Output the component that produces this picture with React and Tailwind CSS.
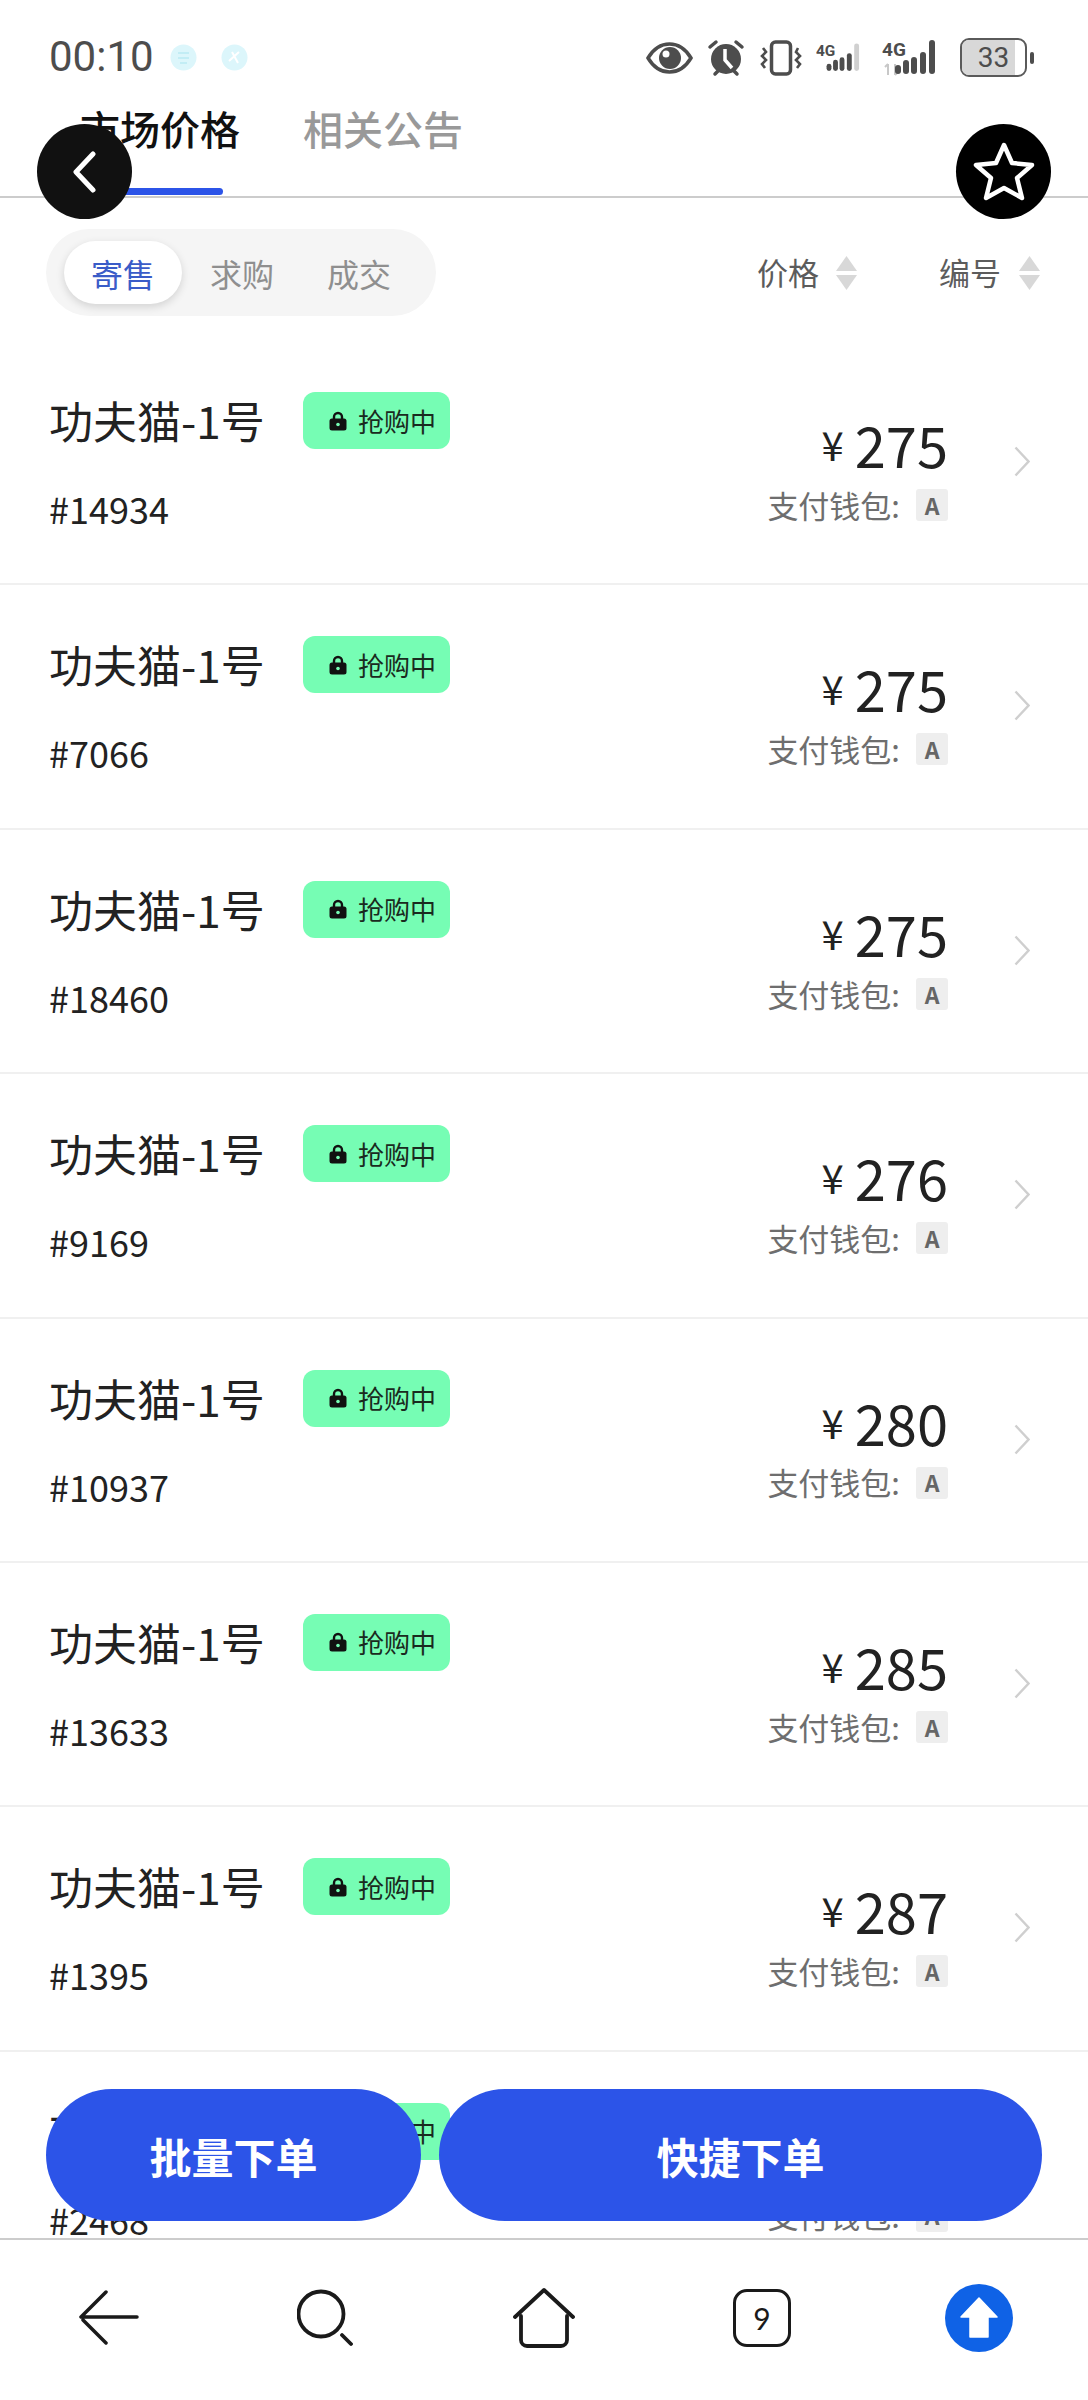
import React from "react";

const rows = [
  ["#14934", "275"], ["#7066", "275"], ["#18460", "275"], ["#9169", "276"],
  ["#10937", "280"], ["#13633", "285"], ["#1395", "287"], ["#2468", "287"],
];

function Sort() {
  return (
    <svg width="21" height="34" viewBox="0 0 21 34" className="block">
      <path d="M10.5 0 21 15H0Z" fill="#d8d8d8" />
      <path d="M10.5 34 21 19H0Z" fill="#d8d8d8" />
    </svg>
  );
}

function Signal({ lastGrey, arrows, w }) {
  const bars = [[21, 12, 7], [30, 9, 8], [39, 4, 8], [48, 0, 8], [57, 0, 8]];
  return (
    <svg width={w} height="36" viewBox="0 0 64 36" className="block">
      <text x="0" y="16" fontSize="19" fontWeight="700" fill="#4d4d4d" fontFamily="'Roboto', sans-serif">4G</text>
      {arrows && <path d="M6 24v11M3 27l3-3M13 24v11M16 32l-3 3" stroke="#c8c8c8" strokeWidth="2" fill="none" />}
      {[[13, 25, 9], [21, 20, 14], [29, 17, 17], [38, 12, 22], [47, 0, 34]].map(([x, y, h], i) => (
        <rect key={i} x={x} y={y} width="6" height={h} rx="3" fill={i === 4 && lastGrey ? "#d0d0d0" : "#4d4d4d"} />
      ))}
    </svg>
  );
}

function StatusBar() {
  return (
    <div className="flex h-[102px] items-start justify-between pl-[49px] pr-[54px] pt-[36px]">
      <div className="flex items-center">
        <span className="text-[42px] leading-[42px] text-[#4d4d4d]" style={{ fontFamily: "Roboto, sans-serif" }}>00:10</span>
        <svg width="27" height="27" viewBox="0 0 27 27" className="ml-[16px]">
          <circle cx="13.5" cy="13.5" r="13" fill="#dcf6fb" />
          <path d="M8 9h11M8 14h11M10 19h7" stroke="#c2edf5" strokeWidth="2" />
        </svg>
        <svg width="27" height="27" viewBox="0 0 27 27" className="ml-[24px]">
          <circle cx="13.5" cy="13.5" r="13" fill="#dcf6fb" />
          <path d="M8 17 18 8M11 8l6 11" stroke="#fff" strokeWidth="2" />
        </svg>
      </div>
      <div className="flex items-center pt-[2px]">
        <svg width="47" height="34" viewBox="0 0 47 34" fill="none">
          <path d="M2 17C8 7 15 3 23.5 3S39 7 45 17C39 27 32 31 23.5 31S8 27 2 17Z" stroke="#4d4d4d" strokeWidth="3.5" />
          <circle cx="24" cy="17" r="11" fill="#4d4d4d" />
          <circle cx="20" cy="13" r="3.5" fill="#fff" />
        </svg>
        <svg width="38" height="38" viewBox="0 0 38 38" fill="none" className="ml-[14px]">
          <circle cx="19" cy="20" r="15" fill="#4d4d4d" />
          <path d="M18 10v11l7 8" stroke="#fff" strokeWidth="3.5" />
          <path d="M3 8l6-5M35 8l-6-5M8 35l3-3M30 35l-3-3" stroke="#4d4d4d" strokeWidth="3.5" strokeLinecap="round" />
        </svg>
        <svg width="42" height="36" viewBox="0 0 42 36" fill="none" className="ml-[15px]">
          <rect x="11.5" y="2" width="19" height="32" rx="4" stroke="#4d4d4d" strokeWidth="3.5" />
          <path d="M3 8 6 12 2 16 6 20 2 24 5 28M38 8l-2 4 4 4-4 4 4 4-3 4" stroke="#4d4d4d" strokeWidth="2.6" />
        </svg>
        <div className="ml-[14px]"><Signal lastGrey w={52} /></div>
        <div className="ml-[14px]"><Signal arrows w={64} /></div>
        <div className="relative ml-[14px] flex h-[39px] w-[67px] items-center justify-center overflow-hidden rounded-[9px] border-[2.5px] border-[#5a5a5a]">
          <div className="absolute inset-y-0 left-0 w-[53px] bg-[#d8d8d8]" />
          <span className="relative text-[28px] leading-none text-[#4d4d4d]" style={{ fontFamily: "Roboto, sans-serif" }}>33</span>
        </div>
        <div className="ml-[3px] h-[12px] w-[4px] rounded-full bg-[#4d4d4d]" />
      </div>
    </div>
  );
}

function Tabs() {
  return (
    <div className="relative flex h-[96px] gap-[63px] border-b-2 border-[#cccccc] pl-[80px] text-[40px] leading-[52px]">
      <div className="relative h-full font-medium text-[#111]">
        市场价格
        <div className="absolute bottom-[1px] left-[20px] h-[7px] w-[123px] rounded-full bg-[#2c54e8]" />
      </div>
      <div className="font-medium text-[#999]">相关公告</div>
    </div>
  );
}

function Filters() {
  return (
    <div className="flex h-[143px] items-center pl-[46px] pr-[48px] pt-[6px]">
      <div className="flex h-[87px] w-[390px] items-center rounded-full bg-[#f5f5f5] pl-[18px] text-[32px]">
        <div className="flex h-[63px] w-[118px] items-center justify-center rounded-full bg-white text-[#3a5cc8] shadow-[0_3px_8px_rgba(0,0,0,0.14)]">寄售</div>
        <div className="w-[119px] pl-[28px] text-[#8f8f8f]">求购</div>
        <div className="pl-[26px] text-[#8f8f8f]">成交</div>
      </div>
      <div className="ml-auto flex items-center text-[31px] text-[#5c5c5c]">
        <span>价格</span>
        <span className="ml-[17px]"><Sort /></span>
        <span className="ml-[82px]">编号</span>
        <span className="ml-[18px]"><Sort /></span>
      </div>
    </div>
  );
}

function Row({ code, price }) {
  return (
    <div className="flex h-[244.4px] shrink-0 items-start border-b-2 border-[#f0f0f0] pl-[49px] pr-[58px]">
      <div className="flex-1 pt-[51px]">
        <div className="flex h-[57px] items-center text-[#222]">
          <span className="w-[254px] text-[44px] leading-[57px]">功夫猫-1号</span>
          <div className="flex h-[57px] w-[147px] items-center rounded-[12px] bg-[#76fdb4] pl-[26px]">
            <svg width="18" height="20" viewBox="0 0 18 20">
              <path d="M5 8V6a4 4 0 0 1 8 0v2" fill="none" stroke="#111" strokeWidth="2.4" />
              <rect x="0.5" y="7.5" width="17" height="12" rx="2.5" fill="#111" />
              <circle cx="9" cy="13.5" r="1.8" fill="#76fdb4" />
            </svg>
            <span className="ml-[11px] text-[26px] leading-none text-[#1a2a20]">抢购中</span>
          </div>
        </div>
        <div className="mt-[37px] text-[36px] leading-[44px] text-[#222]">{code}</div>
      </div>
      <div className="flex w-[185px] flex-col items-end pt-[73px]">
        <div className="flex h-[60px] items-center text-[#222]">
          <span className="text-[40px] leading-none">¥</span>
          <span className="ml-[11px] text-[56px] leading-[60px]">{price}</span>
        </div>
        <div className="mt-[15px] flex h-[32px] items-center text-[31px] text-[#6e6e6e]">
          <span>支付钱包:</span>
          <span className="ml-[16px] flex h-[32px] w-[32px] items-center justify-center rounded-[3px] bg-[#eeeeee] text-[23px] font-bold text-[#666]">A</span>
        </div>
      </div>
      <svg width="16" height="31" viewBox="0 0 16 31" fill="none" className="ml-[66px] mt-[105px]">
        <path d="M1.5 1.5 14.5 15.5 1.5 29.5" stroke="#cfcfcf" strokeWidth="2.4" />
      </svg>
    </div>
  );
}

function BottomNav() {
  return (
    <div className="flex h-[162px] shrink-0 items-center border-t-2 border-[#cccccc] bg-white">
      <div className="flex w-full items-center pb-[4px]">
        <svg width="60" height="56" viewBox="0 0 60 56" fill="none" className="ml-[79px]" stroke="#1a1a1a" strokeWidth="3.5" strokeLinecap="round">
          <path d="M2 27H58M27 2 2 27M27 53 4 30" />
        </svg>
        <svg width="56" height="58" viewBox="0 0 56 58" fill="none" className="ml-[158px]" stroke="#1a1a1a" strokeWidth="3.8" strokeLinecap="round">
          <circle cx="24" cy="25" r="22.5" />
          <path d="M45 46 54 55" />
        </svg>
        <svg width="62" height="60" viewBox="0 0 62 60" fill="none" className="ml-[160px]" stroke="#1a1a1a" strokeWidth="3.8" strokeLinecap="round" strokeLinejoin="round">
          <path d="M2 29 31 2 60 29" />
          <path d="M8 28V52a6 6 0 0 0 6 6H48a6 6 0 0 0 6-6V28" />
        </svg>
        <div className="ml-[158px] flex h-[58px] w-[58px] items-center justify-center rounded-[14px] border-[3.8px] border-[#1a1a1a] text-[30px] leading-none text-[#1a1a1a]" style={{ fontFamily: "Lato, sans-serif" }}>9</div>
        <div className="ml-[154px] flex h-[68px] w-[68px] items-center justify-center rounded-full bg-[#0f62e6]">
          <svg width="38" height="42" viewBox="0 0 38 42">
            <path d="M19 1 37 20H28V40H10V20H1Z" fill="#fff" stroke="#fff" strokeLinejoin="round" strokeWidth="1.5" />
          </svg>
        </div>
      </div>
    </div>
  );
}

export default function App() {
  return (
    <div
      className="relative flex h-[2400px] w-[1088px] flex-col overflow-hidden bg-white"
      style={{ fontFamily: "'Noto Sans CJK SC', 'Noto Sans', sans-serif" }}
    >
      <StatusBar />
      <Tabs />
      <Filters />
      <div className="min-h-0 flex-1 overflow-hidden">
        {rows.map(([code, price]) => <Row key={code} code={code} price={price} />)}
      </div>
      <BottomNav />

      <button className="absolute left-[37px] top-[124px] flex h-[95px] w-[95px] items-center justify-center rounded-full bg-[#111]">
        <svg width="26" height="42" viewBox="0 0 26 42" fill="none"><path d="M21 3 4 21 21 39" stroke="#fff" strokeWidth="5" strokeLinecap="round" strokeLinejoin="round" /></svg>
      </button>
      <button className="absolute left-[956px] top-[124px] flex h-[95px] w-[95px] items-center justify-center rounded-full bg-black">
        <svg width="62" height="60" viewBox="0 0 62 60" fill="none"><path d="M31 3 39 21 59 23 44 36 49 56 31 46 13 56 18 36 3 23 23 21Z" stroke="#fff" strokeWidth="4.5" strokeLinejoin="round" /></svg>
      </button>
      <button className="absolute left-[46px] top-[2089px] flex h-[132px] w-[375px] items-center justify-center rounded-full bg-[#2c54e8] text-[42px] font-bold text-white">批量下单</button>
      <button className="absolute left-[439px] top-[2089px] flex h-[132px] w-[603px] items-center justify-center rounded-full bg-[#2c54e8] text-[42px] font-bold text-white">快捷下单</button>
    </div>
  );
}
